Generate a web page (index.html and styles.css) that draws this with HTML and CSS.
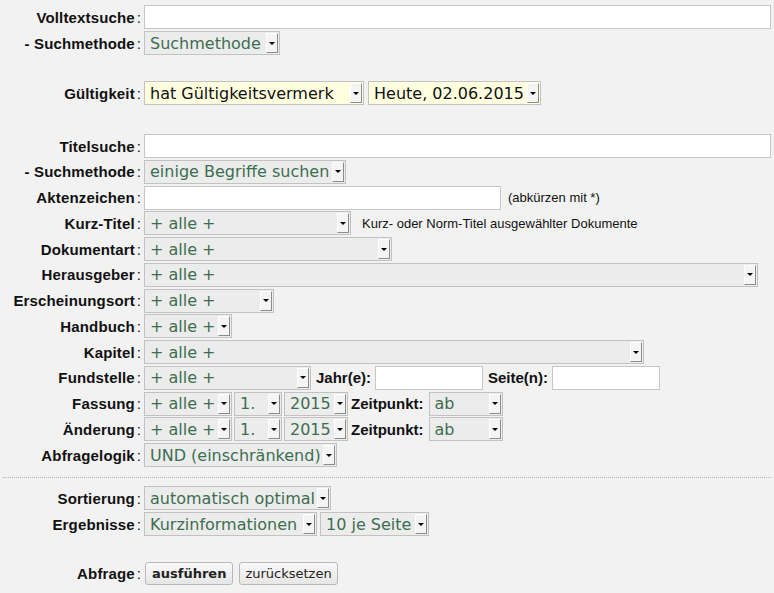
FILE: index.html
```html
<!DOCTYPE html>
<html lang="de">
<head>
<meta charset="utf-8">
<title>Suche</title>
<link rel="stylesheet" href="styles.css">
</head>
<body>
<form class="search">
  <section class="group">
    <div class="row">
      <span class="lbl"><b>Volltextsuche</b><span class="colon">:</span></span>
      <input class="txt grow" type="text">
    </div>
    <div class="row">
      <span class="lbl"><b>- Suchmethode</b><span class="colon">:</span></span>
      <div class="sel w-method"><span class="val">Suchmethode</span><span class="arr"></span></div>
    </div>
  </section>

  <section class="group g-validity">
    <div class="row">
      <span class="lbl"><b>Gültigkeit</b><span class="colon">:</span></span>
      <div class="sel yellow w-valid"><span class="val">hat Gültigkeitsvermerk</span><span class="arr"></span></div>
      <div class="sel yellow w-date ml4"><span class="val">Heute, 02.06.2015</span><span class="arr"></span></div>
    </div>
  </section>

  <section class="group g-title">
    <div class="row">
      <span class="lbl"><b>Titelsuche</b><span class="colon">:</span></span>
      <input class="txt grow" type="text">
    </div>
    <div class="row">
      <span class="lbl"><b>- Suchmethode</b><span class="colon">:</span></span>
      <div class="sel w-method2"><span class="val">einige Begriffe suchen</span><span class="arr"></span></div>
    </div>
    <div class="row">
      <span class="lbl"><b>Aktenzeichen</b><span class="colon">:</span></span>
      <input class="txt w-akten" type="text">
      <span class="note ml7">(abkürzen mit *)</span>
    </div>
    <div class="row">
      <span class="lbl"><b>Kurz-Titel</b><span class="colon">:</span></span>
      <div class="sel w-kurz"><span class="val">+ alle +</span><span class="arr"></span></div>
      <span class="note ml11">Kurz- oder Norm-Titel ausgewählter Dokumente</span>
    </div>
    <div class="row">
      <span class="lbl"><b>Dokumentart</b><span class="colon">:</span></span>
      <div class="sel w-doc"><span class="val">+ alle +</span><span class="arr"></span></div>
    </div>
    <div class="row">
      <span class="lbl"><b>Herausgeber</b><span class="colon">:</span></span>
      <div class="sel w-hrsg"><span class="val">+ alle +</span><span class="arr"></span></div>
    </div>
    <div class="row">
      <span class="lbl"><b>Erscheinungsort</b><span class="colon">:</span></span>
      <div class="sel w-ort"><span class="val">+ alle +</span><span class="arr"></span></div>
    </div>
    <div class="row">
      <span class="lbl"><b>Handbuch</b><span class="colon">:</span></span>
      <div class="sel w-alle"><span class="val">+ alle +</span><span class="arr"></span></div>
    </div>
    <div class="row">
      <span class="lbl"><b>Kapitel</b><span class="colon">:</span></span>
      <div class="sel w-kap"><span class="val">+ alle +</span><span class="arr"></span></div>
    </div>
    <div class="row">
      <span class="lbl"><b>Fundstelle</b><span class="colon">:</span></span>
      <div class="sel w-fund"><span class="val">+ alle +</span><span class="arr"></span></div>
      <b class="ilbl ml5">Jahr(e):</b>
      <input class="txt w-small ml4" type="text">
      <b class="ilbl ml5">Seite(n):</b>
      <input class="txt w-small ml4" type="text">
    </div>
    <div class="row">
      <span class="lbl"><b>Fassung</b><span class="colon">:</span></span>
      <div class="sel w-alle"><span class="val">+ alle +</span><span class="arr"></span></div>
      <div class="sel w-month ml2"><span class="val">1.</span><span class="arr"></span></div>
      <div class="sel w-year ml2"><span class="val">2015</span><span class="arr"></span></div>
      <b class="ilbl ml3">Zeitpunkt:</b>
      <div class="sel w-ab ml5"><span class="val">ab</span><span class="arr"></span></div>
    </div>
    <div class="row">
      <span class="lbl"><b>Änderung</b><span class="colon">:</span></span>
      <div class="sel w-alle"><span class="val">+ alle +</span><span class="arr"></span></div>
      <div class="sel w-month ml2"><span class="val">1.</span><span class="arr"></span></div>
      <div class="sel w-year ml2"><span class="val">2015</span><span class="arr"></span></div>
      <b class="ilbl ml3">Zeitpunkt:</b>
      <div class="sel w-ab ml5"><span class="val">ab</span><span class="arr"></span></div>
    </div>
    <div class="row">
      <span class="lbl"><b>Abfragelogik</b><span class="colon">:</span></span>
      <div class="sel w-logic"><span class="val">UND (einschränkend)</span><span class="arr"></span></div>
    </div>
  </section>

  <hr class="sep">

  <section class="group g-sort">
    <div class="row">
      <span class="lbl"><b>Sortierung</b><span class="colon">:</span></span>
      <div class="sel w-sort"><span class="val">automatisch optimal</span><span class="arr"></span></div>
    </div>
    <div class="row">
      <span class="lbl"><b>Ergebnisse</b><span class="colon">:</span></span>
      <div class="sel w-info"><span class="val">Kurzinformationen</span><span class="arr"></span></div>
      <div class="sel w-page ml3"><span class="val">10 je Seite</span><span class="arr"></span></div>
    </div>
  </section>

  <section class="group g-submit">
    <div class="row">
      <span class="lbl"><b>Abfrage</b><span class="colon">:</span></span>
      <button type="button" class="btn btn-primary ml1">ausführen</button>
      <button type="button" class="btn ml6">zurücksetzen</button>
    </div>
  </section>
</form>
</body>
</html>
```

FILE: styles.css
```css
* { box-sizing: border-box; }

html { background: #f2f2f2; }

body {
  margin: 0;
  padding: 5px 3px 0 0;
  width: 774px;
  background: #f2f2f2;
  font-family: "Liberation Sans", Arial, sans-serif;
  color: #111;
}

.search { display: block; margin: 0; }

.group {
  display: flex;
  flex-direction: column;
  gap: 2px;
}

.g-validity { margin-top: 26px; }
.g-title {
  margin-top: 29px;
  gap: 1.75px;
}
.g-sort { margin-top: 8px; }
.g-submit { margin-top: 25px; }

.sep {
  margin: 10px 0 0 3px;
  height: 0;
  border: 0;
  border-top: 1px dotted #b4b4b4;
}

.row {
  display: flex;
  align-items: center;
  height: 24px;
}

.lbl {
  flex: none;
  width: 144px;
  padding-right: 3px;
  text-align: right;
  font-size: 15px;
  white-space: nowrap;
}

.lbl b {
  font-weight: bold;
  letter-spacing: 0.15px;
}

.colon {
  font-weight: normal;
  margin-left: 2px;
}

.ilbl {
  font-size: 15px;
  font-weight: bold;
  white-space: nowrap;
}

.note {
  font-size: 13px;
  white-space: nowrap;
}

.txt {
  flex: none;
  height: 24px;
  margin: 0;
  padding: 0 4px;
  border: 1px solid #c6c6c6;
  background: #fff;
  font: 15px "DejaVu Sans", sans-serif;
  outline: none;
}

.grow { flex: 1; }
.w-akten { width: 357px; }
.w-small { width: 108px; }

.sel {
  flex: none;
  display: flex;
  align-items: center;
  height: 24px;
  padding: 0 1px 0 5px;
  border: 1px solid #c2c2c2;
  background: #ececec;
  color: #3c6e50;
  font: 16px "DejaVu Sans", sans-serif;
  white-space: nowrap;
  overflow: hidden;
}

.sel .val { flex: 1; }

.sel.yellow {
  background: #ffffe0;
  color: #111;
}

.arr {
  flex: none;
  display: flex;
  align-items: center;
  justify-content: center;
  width: 12px;
  height: 20px;
  background: #f4f4f4;
  border-top: 1px solid #fff;
  border-left: 1px solid #fff;
  border-right: 1px solid #8c8c8c;
  border-bottom: 1px solid #8c8c8c;
}

.arr::after {
  content: "";
  border-left: 3px solid transparent;
  border-right: 3px solid transparent;
  border-top: 3px solid #000;
}

.w-method { width: 136px; }
.w-valid { width: 220px; }
.w-date { width: 173px; }
.w-method2 { width: 202px; }
.w-kurz { width: 207px; }
.w-doc { width: 248px; }
.w-hrsg { width: 614px; }
.w-ort { width: 130px; }
.w-alle { width: 88px; }
.w-kap { width: 500px; }
.w-fund { width: 167px; }
.w-month { width: 48px; }
.w-year { width: 64px; }
.w-ab { width: 74px; }
.w-logic { width: 193px; }
.w-sort { width: 187px; }
.w-info { width: 173px; }
.w-page { width: 109px; }

.btn {
  height: 23px;
  margin: 0;
  padding: 0 5px;
  border: 1px solid #b8b8b8;
  border-radius: 3px;
  background: linear-gradient(#f9f9f9, #e6e6e6);
  color: #222;
  font: 13px "DejaVu Sans", sans-serif;
}

.btn-primary {
  font-weight: bold;
  padding: 0 6px;
}

/* spacing utilities last so they win over component margins */
.ml1 { margin-left: 1px; }
.ml2 { margin-left: 2px; }
.ml3 { margin-left: 3px; }
.ml4 { margin-left: 4px; }
.ml5 { margin-left: 5px; }
.ml6 { margin-left: 6px; }
.ml7 { margin-left: 7px; }
.ml8 { margin-left: 8px; }
.ml11 { margin-left: 11px; }
.ml12 { margin-left: 12px; }
```
